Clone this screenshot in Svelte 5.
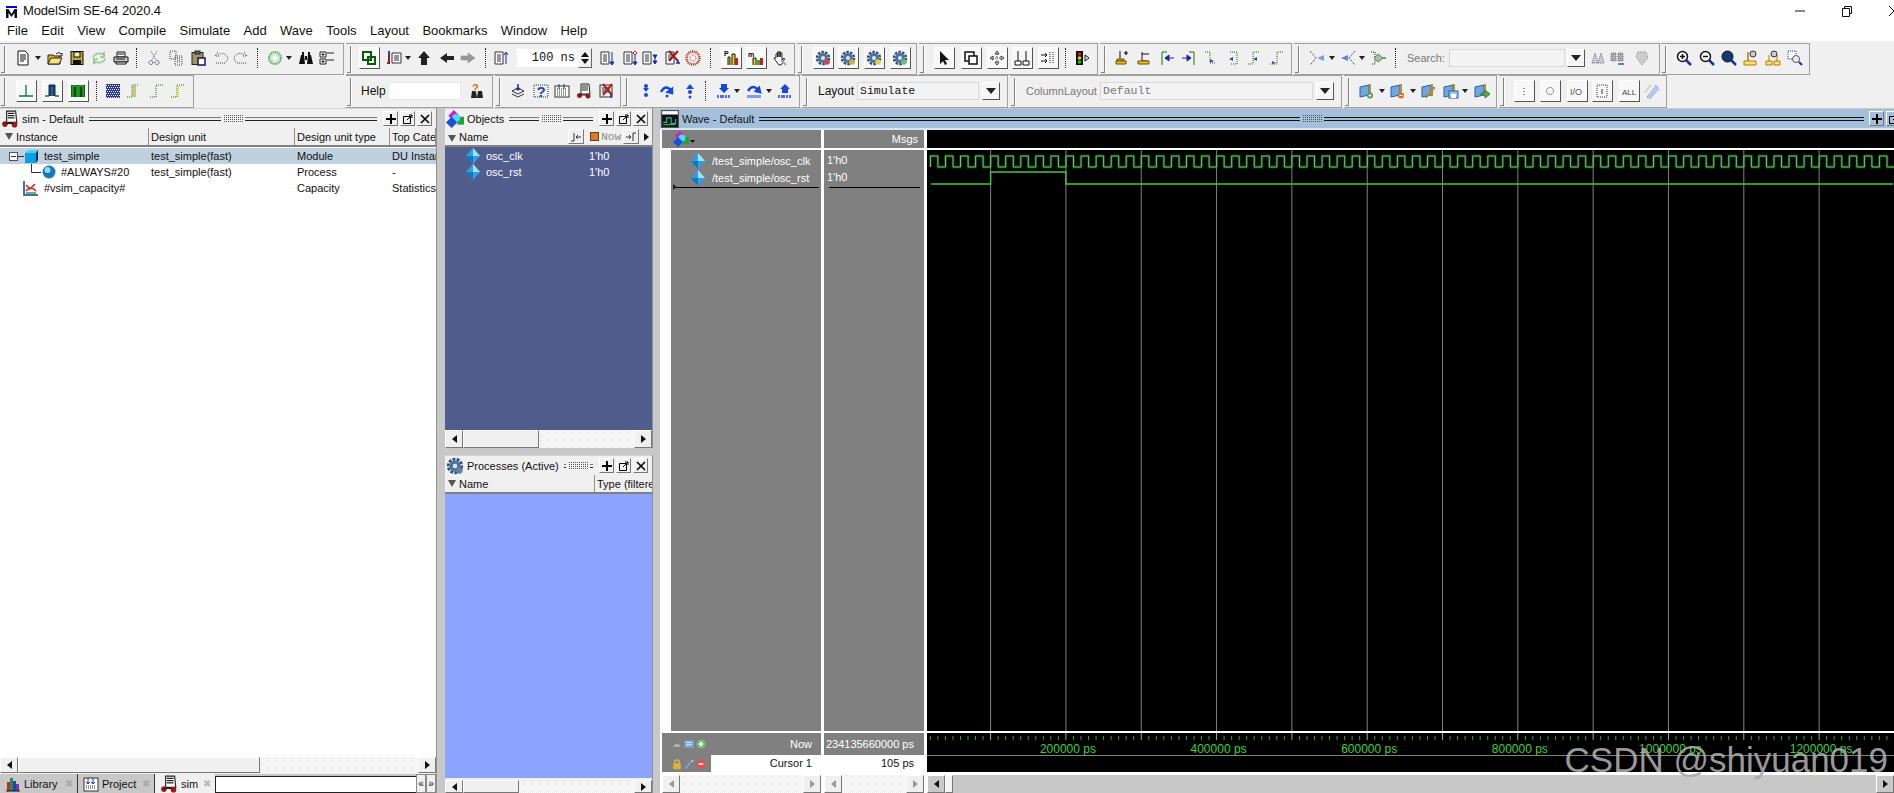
<script>
  const gear = (c) => `<circle cx="8" cy="8" r="6" fill="none" stroke="#2f5078" stroke-width="2.500" stroke-dasharray="2.500 1.200"/><circle cx="8" cy="8" r="5" fill="#4f729c"/><circle cx="8" cy="8" r="2" fill="#dfe6ee"/><circle cx="12" cy="12" r="2.800" fill="${c}"/>`;
  const dia = `<path d="M8 0l7 8-7 8-7-8z" fill="#2f9fe8"/><path d="M8 0l7 8H8z" fill="#9fe4ff"/><path d="M1 8l7 8V8z" fill="#1476c0"/>`;
  const wfold = (b) => `<path d="M1 4l9-2v10l-9 2z" fill="#6fa8e0" stroke="#2c5f94"/><path d="M11 1v12" stroke="#b89030" stroke-width="2"/>${b}`;
  const I = {
    doc: `<path d="M3 1h7l3 3v11H3z" fill="#fff" stroke="#111"/><path d="M5 5h6M5 7h6M5 9h6M5 11h4" stroke="#111"/>`,
    open: `<path d="M1 5h5l1 1h6v8H1z" fill="#d8b430" stroke="#222"/><path d="M1 14l3-6h11l-3 6z" fill="#f8e47a" stroke="#222"/><path d="M9 4q3-3 5 0l1-1v3h-3" fill="none" stroke="#222"/>`,
    save: `<rect x="2" y="1.500" width="12" height="13" fill="#c0a838" stroke="#111"/><rect x="5" y="2" width="6" height="5" fill="#ede6b8" stroke="#111"/><rect x="4" y="10" width="8" height="4.500" fill="#111"/>`,
    reload: `<path d="M2 7q3-5 9-3l2-1v4h-4M14 9q-3 5-9 3l-2 1V9h4" fill="none" stroke="#8cc48c" stroke-width="2" stroke-dasharray="1.500 .5"/>`,
    print: `<path d="M4 2h8v5H4z" fill="#fff" stroke="#111"/><path d="M1 7h14v5H1z" fill="#ccc" stroke="#111"/><path d="M3 12h10v2H3z" fill="#fff" stroke="#111"/><path d="M5 4h6M3 9h9" stroke="#111"/>`,
    cut: `<path d="M5 1l5 9M11 1L6 10" stroke="#666" stroke-dasharray="1 1"/><circle cx="5" cy="12.500" r="2" fill="none" stroke="#22228c" stroke-dasharray="1 .7"/><circle cx="11" cy="12.500" r="2" fill="none" stroke="#22228c" stroke-dasharray="1 .7"/>`,
    copy: `<path d="M2 1h6v8H2zM7 6h7v9H7z" fill="#eee" stroke="#444" stroke-dasharray="1 1"/><path d="M9 8h4M9 10h4M9 12h4" stroke="#446" stroke-dasharray="1 1"/>`,
    paste: `<rect x="2" y="2.500" width="11" height="12" fill="#a09860" stroke="#222"/><rect x="5" y="1" width="5" height="3" fill="#666" stroke="#222"/><rect x="8" y="8" width="7" height="7" fill="#fff" stroke="#12126a" stroke-width="1.500"/>`,
    undo: `<path d="M5 5q4-3 8 0t-1 8H2M5 2L2 6h5" fill="none" stroke="#444" stroke-dasharray="1 1"/>`,
    redo: `<path d="M11 5q-4-3-8 0t1 8h10M11 2l3 4H9" fill="none" stroke="#444" stroke-dasharray="1 1"/>`,
    disc: `<circle cx="8" cy="8" r="6" fill="#cfe8cf" stroke="#6db26d" stroke-width="2" stroke-dasharray="1.500 .6"/><path d="M8 5l3 3-3 3-3-3z" fill="#fff"/>`,
    binoc: `<path d="M1 14l2-9h3l1 9zM15 14l-2-9h-3l-1 9z" fill="#111"/><path d="M4 2h2v4H4zM10 2h2v4h-2zM7 6h2v4H7z" fill="#111"/>`,
    tree: `<path d="M1 2h6v5H1zM1 9h6v5H1z" fill="#fff" stroke="#222"/><path d="M2.500 4.500h3M4 3v3M2.500 11.500h3M4 10v3M8 3h7M8 10h7" stroke="#222"/>`,
    compare: `<rect x="2" y="2" width="8" height="8" fill="none" stroke="#0a5a0a" stroke-width="2"/><rect x="7" y="7" width="7" height="7" fill="none" stroke="#0a5a0a" stroke-width="2"/>`,
    sig: `<path d="M3 6v7H1" fill="none" stroke="#a01818" stroke-width="2"/><path d="M3 1v5" stroke="#2040d0" stroke-width="2"/><path d="M6 3h9v10H6z" fill="#fff" stroke="#333"/><path d="M8 6h5M8 8h5M8 10h5" stroke="#333"/>`,
    up: `<path d="M8 1l6 7h-3v7H5V8H2z" fill="#222"/>`,
    left: `<path d="M1 8l7-5v3h7v4H8v3z" fill="#222"/>`,
    right: `<path d="M15 8L8 3v3H1v4h7v3z" fill="#999" stroke="#888" stroke-dasharray="1 1"/>`,
    lup: `<path d="M2 2h8v12H2z" fill="#fff" stroke="#333"/><path d="M4 5h4M4 7h4M4 9h4M4 11h4" stroke="#333"/><path d="M13 14V3M11 5l2-3 2 3" stroke="#1830a0" fill="none"/>`,
    ldn: `<path d="M2 2h8v12H2z" fill="#fff" stroke="#333"/><path d="M4 5h4M4 7h4M4 9h4M4 11h4" stroke="#333"/><path d="M13 2v11M11 12h4l-2 3z" stroke="#1830a0" fill="#1830a0"/>`,
    ldr: `<path d="M2 2h8v12H2z" fill="#fff" stroke="#333"/><path d="M4 5h4M4 7h4M4 9h4M4 11h4" stroke="#333"/><path d="M13 5v8M11 12h4l-2 3z" stroke="#1830a0" fill="#1830a0"/><path d="M11 3l2-2 2 2-2 2z" fill="none" stroke="#c02020"/>`,
    lds: `<path d="M1 2h8v12H1z" fill="#fff" stroke="#333"/><path d="M3 5h4M3 7h4M3 9h4M3 11h4" stroke="#333"/><path d="M13 6v7M11 11h4l-2 3zM11 5h4l-2 3z" stroke="#1830a0" fill="#1830a0"/>`,
    ldx: `<path d="M1 2h8v12H1z" fill="#fff" stroke="#333"/><path d="M3 5h4M3 7h4M3 9h4" stroke="#333"/><path d="M4 1l9 10M13 1L4 11" stroke="#a01818" stroke-width="2"/><path d="M13 10v3M11 13h4" stroke="#1830a0" stroke-width="1.500"/>`,
    brk: `<circle cx="8" cy="8" r="6.500" fill="none" stroke="#b03020" stroke-width="2.500" stroke-dasharray="1 .8"/><circle cx="8" cy="8" r="3" fill="none" stroke="#c85040" stroke-dasharray="1 .8"/>`,
    perf: `<path d="M1 1h14v14H1z" fill="#fff"/><path d="M5 15V7h2v8M9 15V4h3v11" fill="#e8d820" stroke="#111"/><path d="M12 15V8h3v7" fill="#c82020"/><text x="1" y="6" font-size="7" font-weight="700" fill="#000" font-family="Liberation Sans">P</text>`,
    perm: `<path d="M1 1h14v14H1z" fill="#fff"/><path d="M5 15V8h3v7" fill="#e8d820" stroke="#111"/><path d="M9 15v-5h3v5" fill="#40a040"/><path d="M12 15V8h3v7" fill="#c82020"/><text x="0" y="7" font-size="7" font-weight="700" fill="#000" font-family="Liberation Sans">m</text>`,
    hand: `<path d="M4 8V4q1-1 1.500 0v3-5q1-1 1.500 0v5-5q1-1 1.500 0v5-4q1-1 1.500 0v7l2-2q1 .5 0 2l-3 5H7L4 11 2 8q1-1 2 0z" fill="#fff" stroke="#222"/><path d="M9 10l5 5" stroke="#9ab" stroke-width="2"/>`,
    g1: gear('#c84848'), g2: gear('#d0b040'), g3: gear('#e0d040'), g4: gear('#70c070'),
    arrow: `<path d="M4 1v13l3-3 2 4 2-1-2-4h4z" fill="#111"/>`,
    zoomr: `<path d="M2 2h9v9H2z" fill="none" stroke="#111" stroke-width="1.500"/><path d="M6 6h8v8H6z" fill="#fff" stroke="#111" stroke-width="1.500"/>`,
    move: `<path d="M8 1l2 3H6zM8 15l2-3H6zM1 8l3-2v4zM15 8l-3-2v4z" fill="#fff" stroke="#333"/><path d="M8 4v8M4 8h8" stroke="#444" stroke-dasharray="1 1"/>`,
    cur2: `<path d="M4 1v10M12 1v10M1 11h6v4H1zM9 11h6v4H9z" fill="#fff" stroke="#111"/>`,
    ports: `<path d="M3 3h10v10H3z" fill="#fff"/><path d="M1 5h6M1 11h6M5 3l2 2-2 2M5 9l2 2-2 2" fill="none" stroke="#111"/><path d="M10 2v12M13 2v12" stroke="#111" stroke-dasharray="1 1"/>`,
    light: `<rect x="2" y="1" width="7" height="14" fill="#111"/><circle cx="5.500" cy="4" r="1.800" fill="#e01010"/><circle cx="5.500" cy="8" r="1.800" fill="#e0d010"/><circle cx="5.500" cy="12" r="1.800" fill="#10d010"/><path d="M11 5l4 3-4 3z" fill="none" stroke="#111"/>`,
    addc: `<path d="M6 1v10" stroke="#111"/><path d="M3 9h7v2H3z" fill="#f0c020" stroke="#6a5000"/><path d="M2 11h10v3H2z" fill="#f0c020" stroke="#6a5000"/><path d="M10 3h4M12 1v4" stroke="#111" stroke-width="1.200"/>`,
    delc: `<path d="M6 2v9h6M6 4h7" stroke="#111" fill="none"/><path d="M2 11h11v3H2z" fill="#f0c020" stroke="#6a5000"/>`,
    prev: `<path d="M1 15V2h5" fill="none" stroke="#0a7a0a"/><path d="M4 8h9M4 8l4-3v6z" stroke="#2020c0" fill="#2020c0"/>`,
    nxt: `<path d="M15 2v13h-5" fill="none" stroke="#0a7a0a" transform="matrix(1 0 0 -1 0 17)"/><path d="M3 8h8M12 8L8 5v6z" stroke="#2020c0" fill="#2020c0"/>`,
    e1: `<path d="M2 2h5v11h6" fill="none" stroke="#0a7a0a" stroke-dasharray="1 1"/><path d="M7 9l4 2-4 2z" fill="#44a"/>`,
    e2: `<path d="M4 2h7v12H4" fill="none" stroke="#0a7a0a" stroke-dasharray="1 1"/><path d="M3 9l4-2v4z" fill="#44a"/>`,
    e3: `<path d="M2 14h5V2h6" fill="none" stroke="#0a7a0a" stroke-dasharray="1 1"/><path d="M7 9l4-2v4z" fill="#44a"/>`,
    e4: `<path d="M1 14h7V2h7" fill="none" stroke="#0a7a0a" stroke-dasharray="1 1"/><path d="M3 11l4 2-4 1z" fill="#44a"/>`,
    m1: `<path d="M1 1l6 7-6 7" fill="none" stroke="#222" stroke-dasharray="1 1"/><path d="M8 8l7-3v6z" fill="#7aa4d8"/>`,
    m2: `<path d="M15 1L9 8l6 7" fill="none" stroke="#222" stroke-dasharray="1 1"/><path d="M1 8l7-3v6z" fill="#5a88d0"/>`,
    m3: `<path d="M1 2h4v12H1" fill="none" stroke="#222" stroke-dasharray="1 1"/><path d="M8 4l5 4-5 4-4-4z" fill="#9cc89c" stroke="#5a8a5a"/><path d="M13 8h3" stroke="#222"/>`,
    f1: `<path d="M2 13l3-10 3 10zM8 13l3-10 3 10z" fill="#ccd" stroke="#667" stroke-dasharray="1 1"/>`,
    f2: `<path d="M2 11V3h5v8zM9 11V3h5v8z" fill="#aaa" stroke="#777" stroke-dasharray="1 1"/><path d="M9 14h6" stroke="#6a7ad8" stroke-width="2"/>`,
    f3: `<path d="M4 2h8l2 6-6 7-6-8z" fill="#ccc" stroke="#888" stroke-dasharray="1 1"/>`,
    zin: `<circle cx="6.500" cy="6.500" r="5" fill="#fff" stroke="#111" stroke-width="1.500"/><path d="M4 6.500h5M6.500 4v5" stroke="#111" stroke-width="1.500"/><path d="M10 10l5 5" stroke="#1830a0" stroke-width="2.500"/>`,
    zout: `<circle cx="6.500" cy="6.500" r="5" fill="#fff" stroke="#111" stroke-width="1.500"/><path d="M4 6.500h5" stroke="#111" stroke-width="1.500"/><path d="M10 10l5 5" stroke="#1830a0" stroke-width="2.500"/>`,
    zfull: `<circle cx="6.500" cy="6.500" r="5.500" fill="#0e3a78" stroke="#111"/><path d="M10 10l5 5" stroke="#1830a0" stroke-width="2.500"/>`,
    zc1: `<path d="M2 11h12v4H2z" fill="#ffe070" stroke="#b08000"/><path d="M6 11V2" stroke="#b08000" stroke-width="1.500"/><circle cx="11" cy="4" r="3" fill="#ccc" stroke="#333"/>`,
    zc2: `<path d="M1 11h6v4H1zM9 11h6v4H9z" fill="#ffe070" stroke="#b08000"/><path d="M4 11V5M12 11V5" stroke="#b08000"/><circle cx="9" cy="4" r="3" fill="#ccc" stroke="#333"/>`,
    zsel: `<path d="M1 1h8v8H1z" fill="#fff" stroke="#1830a0" stroke-dasharray="1 1"/><circle cx="9" cy="9" r="3.500" fill="#eee" stroke="#555"/><path d="M12 12l3 3" stroke="#1830a0" stroke-width="2"/>`,
    t1: `<path d="M8 2v11M1 13h14" stroke="#0a7a3a" stroke-width="1.300"/>`,
    t2: `<path d="M1 13h4M11 13h4" stroke="#0a7a3a" stroke-width="1.300"/><path d="M5 13V2h6v11" fill="#1a3a8c" stroke="#0a2a6a"/><path d="M7 13V4h2v9" fill="#3a6a4c"/>`,
    t3: `<path d="M1 14V2h14v12z" fill="#0a6a0a"/><path d="M3 14V3h4v11M9 14V3h4v11" fill="#0a4a0a" stroke="#3ac03a"/>`,
    dith: `<rect x="1" y="1" width="14" height="14" fill="#2a3a9a"/><path d="M1 2.500h14M2 4.500h13M1 6.500h14M2 8.500h13M1 10.500h14M2 12.500h13M1 14.500h14" stroke="#e8e8f8" stroke-dasharray="1 1"/>`,
    ed1: `<path d="M1 14h5V2h7" fill="none" stroke="#0a7a0a" stroke-dasharray="1 1"/><path d="M7 2v12M9 2v12" stroke="#b8b860" stroke-width="1.500"/>`,
    ed2: `<path d="M1 14h6V2h7" fill="none" stroke="#0a7a0a" stroke-dasharray="1 1"/>`,
    ed3: `<path d="M1 14h6V2h7" fill="none" stroke="#0a7a0a" stroke-dasharray="1 1"/><path d="M8 3v11" stroke="#d8e040" stroke-width="1.500"/>`,
    stack: `<path d="M2 8l6-3 6 3-6 3z" fill="#eee" stroke="#333"/><path d="M2 11l6 3 6-3" fill="none" stroke="#333"/><path d="M8 1v6M6 5l2 2 2-2" stroke="#1830a0" fill="none" stroke-width="1.500"/>`,
    qm: `<rect x="1" y="2" width="14" height="12" fill="#eee" stroke="#333" stroke-dasharray="1 1"/><text x="3.500" y="14" font-size="15" font-weight="700" fill="#1848b0" font-family="Liberation Sans">?</text>`,
    cal: `<rect x="1" y="3" width="14" height="11" fill="#fff" stroke="#333"/><path d="M3 6h10M3 8h10M3 10h10M3 12h10" stroke="#333" stroke-dasharray="1 1"/><path d="M5 1v5M10 1v5" stroke="#1830a0"/>`,
    sim: `<path d="M5 1h8l1 10H5z" fill="#fff" stroke="#222"/><path d="M6 3h6M6 5h6M6 7h6" stroke="#222"/><circle cx="3.500" cy="12.500" r="2.500" fill="#a01818"/><circle cx="12" cy="13" r="2.500" fill="#a01818"/><path d="M3 12h8" stroke="#222"/>`,
    xdoc: `<rect x="1" y="2" width="12" height="12" fill="#eee" stroke="#333"/><path d="M3 5h8M3 7h8M3 9h8" stroke="#333"/><path d="M4 1l9 11M13 1L4 12" stroke="#b02020" stroke-width="2"/><path d="M12 11v4" stroke="#1830a0" stroke-width="1.500"/>`,
    helpb: `<path d="M2 15l1-7h4l1 7zM8 15l1-7h4l1 7z" fill="#222"/><text x="3" y="9" font-size="11" font-weight="700" fill="#c87818" font-family="Liberation Sans">?</text>`,
    sd1: `<circle cx="8" cy="3" r="2" fill="#1848d8"/><path d="M5 5h6l-3 4z" fill="#1848d8"/><circle cx="8" cy="12" r="2" fill="#1848d8"/>`,
    so: `<path d="M2 9q5-9 11 0M13 10l-4-1 4-3z" fill="none" stroke="#1848d8" stroke-width="2.500"/><circle cx="8" cy="13" r="1.500" fill="#1848d8"/>`,
    su: `<path d="M8 1l4 5H4z" fill="#1848d8"/><circle cx="8" cy="9" r="2" fill="#1848d8"/><circle cx="8" cy="14" r="1.500" fill="#1848d8"/>`,
    sbd: `<path d="M5 1h6v4h2l-5 5-5-5h2z" fill="#1848d8"/><path d="M2 12v3M5 12v3M7 12v3M10 12v3M13 12v3" stroke="#1848d8" stroke-width="1.500"/>`,
    sbo: `<path d="M2 8q5-8 11 0M14 9l-4-1 3-3z" fill="none" stroke="#1848d8" stroke-width="2.500"/><path d="M2 12v3M4 12v3M6 12v3M8 12v3M10 12v3M12 12v3M14 12v3" stroke="#1848d8"/>`,
    sbu: `<path d="M8 1l5 5h-2v4H5V6H3z" fill="#1848d8"/><path d="M2 12v3M5 12v3M7 12v3M10 12v3M13 12v3" stroke="#1848d8" stroke-width="1.500"/>`,
    la: wfold(`<circle cx="11" cy="12.500" r="3" fill="#50a050"/><path d="M9.500 12.500h3M11 11v3" stroke="#fff"/>`),
    ld: wfold(`<circle cx="11" cy="12.500" r="3" fill="#e07020"/><path d="M9.500 12.500h3" stroke="#fff"/>`),
    le: wfold(`<path d="M14 5L7 13l-2 2 1-3 7-8z" fill="#f0c060" stroke="#a07020"/>`),
    ls: wfold(`<rect x="6" y="8" width="9" height="7" fill="#9cc8e8" stroke="#2c5f94"/><rect x="8" y="11" width="5" height="4" fill="#fff"/>`),
    lg: wfold(`<path d="M7 10h4V7l5 4-5 4v-3H7z" fill="#60a860" stroke="#3a7a3a"/>`),
    b1: `<path d="M8 5v1M8 8v1M8 11v1" stroke="#333"/>`,
    b2: `<circle cx="8" cy="8" r="3.500" fill="none" stroke="#555" stroke-dasharray="1 .6"/>`,
    b3: `<text x="1" y="12" font-size="9" fill="#555" font-family="Liberation Sans">I/O</text>`,
    b4: `<path d="M3 2h10v12H3z" fill="none" stroke="#333" stroke-dasharray="1 1"/><path d="M8 6v5" stroke="#333"/>`,
    b5: `<text x="1" y="12" font-size="8" fill="#444" font-family="Liberation Sans">ALL</text>`,
    b6: `<path d="M3 14L12 2l3 4-9 10z" fill="#b8c8e8" stroke="#8898c8" stroke-dasharray="1 1"/><path d="M1 9l6-7" stroke="#9cc89c" stroke-width="2" stroke-dasharray="1 1"/>`,
    obj: `<path d="M7 0l5 5-5 5-5-5z" fill="#d020c0"/><path d="M10 6h6v7h-6z" fill="#20a040"/><circle cx="9" cy="7" r="3.500" fill="#50d8f0"/><path d="M5 6l5 5-5 5-5-5z" fill="#1850e0"/>`,
    wavew: `<rect x=".5" y=".5" width="15" height="15" fill="#111" stroke="#555"/><rect x="1" y="1" width="14" height="3" fill="#fff"/><path d="M2 11h3V7h4v5h4V8" fill="none" stroke="#20c0a0"/><path d="M2 13h11" stroke="#20c060"/>`,
    diamond: dia,
    ball: `<circle cx="8" cy="8" r="6.500" fill="#1878b8"/><circle cx="6.500" cy="6" r="3" fill="#90d8f0"/>`,
    cube: `<path d="M2 5h11v10H2z" fill="#0aa0e8"/><path d="M2 5l4-3h9l-2 3z" fill="#48d0f8"/><path d="M13 5l2-3v10l-2 3z" fill="#0a2848"/>`,
    cap: `<path d="M1 1v14h14" fill="none" stroke="#1a3a8c" stroke-width="1.500"/><path d="M3 5l4 4 5-5M3 11q5-6 10 0" fill="none" stroke="#d02020" stroke-width="1.500"/><path d="M3 13h10" stroke="#20a060" stroke-width="1.500"/>`,
    lib: `<path d="M2 15V6h3v9z" fill="#c03020"/><path d="M5 15V2h3v13z" fill="#209050"/><path d="M8 15V5h3v10z" fill="#2040c0"/><path d="M11 15V8h3v7z" fill="#8030a0"/><path d="M1 15h14" stroke="#111"/>`,
    proj: `<rect x="1" y="2" width="14" height="13" fill="#fff" stroke="#333"/><path d="M3 10h10M3 12h10" stroke="#333" stroke-dasharray="1 1"/><path d="M5 2v6M3 6l2 2 2-2M10 2v6M8 6l2 2 2-2" stroke="#1830a0" fill="none"/>`,
    gear0: gear('#5f82ac'),
    lock: `<path d="M5 7V4q3-3 6 0v3" fill="none" stroke="#e0c060" stroke-width="1.500"/><rect x="3" y="7" width="10" height="8" fill="#e8b030"/>`,
    wrench: `<path d="M3 14l7-8" stroke="#7aa4e0" stroke-width="2.500"/><path d="M10 5l3-3 1 3z" fill="#ddd"/>`,
    minus: `<circle cx="8" cy="8" r="6" fill="#e05050"/><path d="M5 8h6" stroke="#fff" stroke-width="2"/>`,
    plusg: `<circle cx="8" cy="8" r="6" fill="#70c070"/><path d="M5 8h6M8 5v6" stroke="#fff" stroke-width="2"/>`,
    note: `<rect x="2" y="3" width="12" height="10" fill="#7aa8e0"/><path d="M4 6h8M4 9h8" stroke="#fff"/>`,
    plugs: `<path d="M3 12h10l-2-4H5zM6 4v4M10 4v4" fill="#bbb" stroke="#888"/>`
  };

  const BORDER = new Set(['compare','perf','perm','g1','g2','g3','g4','arrow','zoomr','move','cur2','ports','t1','t2','t3','b1','b2','b3','b4','b5']);
  const W = (id) => id === 'c' ? 7 : id === 's' ? 2 : BORDER.has(id) ? 21 : 18;

  function build(x0, w, list) {
    let end = x0 + 7;
    const items = list.map((e) => {
      const kind = e.k || (e[0] === 'c' ? 'caret' : e[0] === 's' ? 'sep' : 'icon');
      const id = e[0];
      const width = e.k ? e.w : W(id);
      const left = e.k ? e.x : e[1] - width / 2;
      const m = left - end;
      end = left + width;
      return { kind, id, width, m, text: e.t, b: BORDER.has(id) };
    });
    return { x0, w, items };
  }
  const row = (groups) => {
    let end = 0;
    return groups.map((g) => {
      const b = build(g[0], g[1] - g[0], g[2]);
      b.m = g[0] - end;
      end = g[1];
      return b;
    });
  };

  const row1 = row([
    [0, 344, [['doc',23],['c',38],['open',55],['save',77],['reload',99],['print',121],['s',137],['cut',154],['copy',176],['paste',198],['undo',221],['redo',241],['s',258],['disc',275],['c',289],['binoc',306],['tree',327]]],
    [346, 795, [['compare',369],['sig',394],['c',408],['up',424],['left',447],['right',468],['s',486],['lup',501],{k:'spin',x:517,w:60,t:'100 ns'},{k:'spinb',x:578,w:14},['ldn',607],['ldr',630],['lds',650],['ldx',673],['brk',693],['s',711],['perf',731],['perm',756],['hand',780]]],
    [797, 917, [['g1',823],['g2',848],['g3',874],['g4',900]]],
    [919, 1098, [['arrow',944],['zoomr',971],['move',997],['cur2',1022],['ports',1048],['s',1066],['light',1082]]],
    [1100, 1292, [['addc',1122],['delc',1144],['prev',1169],['nxt',1187],['e1',1211],['e2',1234],['e3',1254],['e4',1277]]],
    [1294, 1660, [['m1',1317],['c',1332],['m2',1348],['c',1362],['m3',1378],['s',1396],{k:'label dim',x:1407,w:38,t:'Search:'},{k:'combo',x:1449,w:116,t:''},{k:'dd',x:1567,w:18},['f1',1598],['f2',1617],['f3',1642]]],
    [1661, 1810, [['zin',1684],['zout',1707],['zfull',1729],['zc1',1750],['zc2',1773],['zsel',1795]]]
  ]);
  const row2 = row([
    [0, 194, [['t1',26],['t2',52],['t3',78],['s',97],['dith',113],['ed1',134],['ed2',157],['ed3',178]]],
    [346, 493, [{k:'label',x:361,w:22,t:'Help'},{k:'input',x:388,w:73},['helpb',477]]],
    [495, 621, [['stack',518],['qm',541],['cal',562],['sim',584],['xdoc',607]]],
    [622, 800, [['sd1',646],['so',667],['su',690],['s',706],['sbd',724],['c',737],['sbo',754],['c',769],['sbu',785]]],
    [802, 1008, [{k:'label',x:818,w:36,t:'Layout'},{k:'combo',x:857,w:122,t:'Simulate'},{k:'dd',x:982,w:18}]],
    [1010, 1342, [{k:'label dim',x:1026,w:72,t:'ColumnLayout'},{k:'combo off',x:1100,w:213,t:'Default'},{k:'dd',x:1316,w:18}]],
    [1344, 1497, [['la',1367],['c',1382],['ld',1398],['c',1413],['le',1429],['ls',1451],['c',1465],['lg',1482]]],
    [1499, 1667, [['b1',1524],['b2',1550],['b3',1577],['b4',1602],['b5',1629],['b6',1652]]]
  ]);

  const menu = ['File','Edit','View','Compile','Simulate','Add','Wave','Tools','Layout','Bookmarks','Window','Help'];

  // Wave canvas geometry: origin at (927,150)
  const OX = 927, OY = 150, WW = 967, WH = 581;
  const gridStep = 75.32;
  const grid0 = 990.6;
  const gridX = Array.from({ length: 12 }, (_, i) => grid0 + i * gridStep - OX);
  let clk = `M${930.4 - OX} ${167 - OY}`;
  for (let x = 930.4; x < 1894; x += 15.064) {
    clk += `V${156 - OY}H${(x + 7.532 - OX).toFixed(1)}V${167 - OY}H${(x + 15.064 - OX).toFixed(1)}`;
  }
  const g = (x) => (x - OX).toFixed(1);
  const rst = `M${g(931)} ${184 - OY}H${g(990.6)}V${172 - OY}H${g(1065.9)}V${184 - OY}H${g(1893)}`;
  const ticks = Array.from({ length: 130 }, (_, i) => grid0 + (i - 8) * 7.532 - OX).filter((x) => x >= 0 && x < WW);
  const isMajor = (x) => Math.abs(((x - (grid0 - OX)) / gridStep) - Math.round((x - (grid0 - OX)) / gridStep)) < 0.01;
  const labels = [['200000 ps',1],['400000 ps',3],['600000 ps',5],['800000 ps',7],['1000000 ps',9],['1200000 ps',11]];
</script>

{#snippet ic(id, size = 16)}
  <svg class="ic" width={size} height={size} viewBox="0 0 16 16">{@html I[id]}</svg>
{/snippet}

{#snippet grip()}
  <div class="grip">
    <span class="gl"></span><span class="dots"></span><span class="gl"></span>
  </div>
{/snippet}

{#snippet btns()}
  <span class="pb"><svg width="12" height="12" viewBox="0 0 12 12"><path d="M6 1v10M1 6h10" stroke="#000" stroke-width="2"/></svg></span>
  <span class="pb"><svg width="12" height="12" viewBox="0 0 12 12"><path d="M1.500 3.500h7v7h-7z" fill="none" stroke="#000"/><path d="M5 7l5-5M7 2h3v3" fill="none" stroke="#000"/></svg></span>
  <span class="pb"><svg width="12" height="12" viewBox="0 0 12 12"><path d="M2 2l8 8M10 2l-8 8" stroke="#000" stroke-width="1.600"/></svg></span>
{/snippet}

{#snippet arrow(dir, off)}
  <span class="sa" class:off><span class={dir}></span></span>
{/snippet}

{#snippet sb(cls, thumb, off)}
  <div class="sb {cls}">
    {@render arrow('al', off)}
    <span class="thumb" class:hide={thumb === 0} style:width="{thumb}px"></span>
    <span class="track"></span>
    {@render arrow('ar', off)}
  </div>
{/snippet}

{#snippet tbrow(groups, cls)}
  <div class="tbrow {cls}">
    {#each groups as gr}
      <div class="tb" style:margin-left="{gr.m}px" style:width="{gr.w}px">
        <span class="tgrip"></span>
        {#each gr.items as it}
          <span class="item {it.kind}" class:bd={it.b} style:margin-left="{it.m}px" style:width="{it.width}px">
            {#if it.kind === 'icon'}
              {@render ic(it.id)}
            {:else if it.kind === 'spinb'}
              <span class="up"></span><span class="dn"></span>
            {:else if it.kind === 'dd'}
              <span class="ddt"></span>
            {:else if it.text}
              {it.text}
            {/if}
          </span>
        {/each}
      </div>
    {/each}
  </div>
{/snippet}

<div class="app">
  <header class="titlebar">
    <svg class="logo" width="16" height="16" viewBox="0 0 16 16"><rect x="3" y="3" width="11" height="2" fill="#0000d0"/><path d="M3 15V6h2.500L8.500 11 11.500 6H14v9h-2.500V10L8.500 14 5.500 10v5z" fill="#111"/></svg>
    <span class="apptitle">ModelSim SE-64 2020.4</span>
    <div class="winctl">
      <svg width="12" height="12" viewBox="0 0 12 12"><path d="M1 6h10" stroke="#111"/></svg>
      <svg width="12" height="12" viewBox="0 0 12 12"><path d="M1.500 3.500h7v8h-7zM3.500 3V1.500h7v7H9" fill="none" stroke="#111"/></svg>
      <svg width="12" height="12" viewBox="0 0 12 12"><path d="M1 1l10 10M11 1L1 11" stroke="#111"/></svg>
    </div>
  </header>
  <nav class="menubar">
    {#each menu as m}<span>{m}</span>{/each}
  </nav>

  <section class="toolbars">
    {@render tbrow(row1, 'r1')}
    {@render tbrow(row2, 'r2')}
  </section>

  <main class="work">
    <div class="col left">
      <div class="panel sim">
        <div class="ptitle">
          {@render ic('sim', 18)}<span class="ptext">sim - Default</span>{@render grip()}{@render btns()}
        </div>
        <div class="thead simgrid">
          <span><i class="sort"></i>Instance</span><span>Design unit</span><span>Design unit type</span><span>Top Category</span>
        </div>
        <div class="tbody white">
          <div class="trow simgrid sel">
            <span class="tree">
              <svg class="gut" width="40" height="16" viewBox="0 0 40 16">
                <rect x="9.500" y="4.500" width="8" height="8" fill="#fff" stroke="#555"/><path d="M11 8.500h5M18 8.500h6" stroke="#333"/>
                <g transform="translate(23 0)">{@html I.cube}</g>
              </svg>test_simple
            </span><span>test_simple(fast)</span><span>Module</span><span>DU Instance</span>
          </div>
          <div class="trow simgrid">
            <span class="tree">
              <svg class="gut" width="57" height="16" viewBox="0 0 57 16">
                <path d="M31.500 0v8.500H41" fill="none" stroke="#333"/>
                <g transform="translate(41 0)">{@html I.ball}</g>
              </svg>#ALWAYS#20
            </span><span>test_simple(fast)</span><span>Process</span><span>-</span>
          </div>
          <div class="trow simgrid">
            <span class="tree">
              <svg class="gut" width="40" height="16" viewBox="0 0 40 16">
                <g transform="translate(23 0)">{@html I.cap}</g>
              </svg>#vsim_capacity#
            </span><span></span><span>Capacity</span><span>Statistics</span>
          </div>
        </div>
        {@render sb('simsb', 242, false)}
        <div class="tabs">
          <span class="tab t1">{@render ic('lib',16)}<b>Library</b><em>✖</em></span>
          <span class="tab t2">{@render ic('proj',16)}<b>Project</b><em>✖</em></span>
          <span class="tab t3">{@render ic('sim',18)}<b>sim</b><em>✖</em></span>
          <span class="tabfill"></span>
          <span class="tabnav">«</span><span class="tabnav">»</span>
        </div>
      </div>
    </div>

    <div class="col mid">
      <div class="panel obj">
        <div class="ptitle">
          {@render ic('obj', 18)}<span class="ptext">Objects</span>{@render grip()}{@render btns()}
        </div>
        <div class="thead objhead">
          <span class="oname"><i class="sort"></i>Name</span>
          <span class="now">
            <span class="nb"><svg width="12" height="12" viewBox="0 0 12 12"><path d="M1 10h3V2M6 6h5M6 6l2-2M6 6l2 2" fill="none" stroke="#333"/></svg></span>
            <i class="osq"></i><span class="nowt">Now</span>
            <span class="nb"><svg width="12" height="12" viewBox="0 0 12 12"><path d="M11 2H8v8M1 6h5M6 6L4 4M6 6L4 8" fill="none" stroke="#333"/></svg></span>
            <i class="nar"></i>
          </span>
        </div>
        <div class="tbody navy">
          {#each ['osc_clk','osc_rst'] as s}
            <div class="orow">{@render ic('diamond', 16)}<span class="on">{s}</span><span class="ov">1'h0</span></div>
          {/each}
        </div>
        {@render sb('objsb', 76, false)}
      </div>
      <div class="panel proc">
        <div class="ptitle">
          {@render ic('gear0', 18)}<span class="ptext">Processes (Active)</span>{@render grip()}{@render btns()}
        </div>
        <div class="thead prochead"><span class="pn"><i class="sort"></i>Name</span><span>Type (filtered)</span></div>
        <div class="tbody peri"></div>
        {@render sb('procsb', 56, false)}
      </div>
    </div>

    <div class="col wave">
      <div class="ptitle wt">
        {@render ic('wavew', 18)}<span class="ptext">Wave - Default</span>{@render grip()}{@render btns()}
      </div>
      <div class="wgrid">
        <div class="wh hn">
          <svg class="ic" width="26" height="18" viewBox="0 0 26 18"><g transform="translate(3 1)">{@html I.obj}</g><path d="M20 10h5l-2.500 3z" fill="#111"/></svg>
        </div>
        <div class="wh hv">Msgs</div>
        <div class="wh hw"></div>

        <div class="wnames">
          <div class="strip"></div>
          <div class="nlist">
            {#each ['/test_simple/osc_clk','/test_simple/osc_rst'] as s}
              <div class="nrow">{@render ic('diamond', 16)}<span>{s}</span></div>
            {/each}
            <div class="nline"><i></i></div>
          </div>
        </div>
        <div class="wvals">
          <div class="vrow">1'h0</div><div class="vrow">1'h0</div>
          <div class="vline"></div>
        </div>
        <div class="wcanvas">
          <svg width={WW} height={WH} viewBox="0 0 {WW} {WH}">
            {#each gridX as x}<line x1={x} x2={x} y1="0" y2={WH} stroke="#808080"/>{/each}
            <path d={clk} fill="none" stroke="#1e6e1e" stroke-width="3" opacity=".5"/>
            <path d={clk} fill="none" stroke="#62d262"/>
            <path d={rst} fill="none" stroke="#3ccc3c" stroke-width="1.400"/>
          </svg>
        </div>

        <div class="wb bn">
          <div class="now1">
            <span class="mini">{@render ic('plugs',12)}{@render ic('note',12)}{@render ic('plusg',12)}</span><span>Now</span>
          </div>
          <div class="cur1">
            <span class="mini">{@render ic('lock',12)}{@render ic('wrench',12)}{@render ic('minus',12)}</span><span class="curw">Cursor 1</span>
          </div>
        </div>
        <div class="wb bv">
          <div class="nowv">234135660000 ps</div>
          <div class="curv">105 ps</div>
        </div>
        <div class="wb ba">
          <svg width={WW} height="39" viewBox="0 0 {WW} 39">
            {#each ticks as x}
              <line x1={x} x2={x} y1={isMajor(x) ? 0 : 3} y2="7" stroke={isMajor(x) ? '#7fbf7f' : '#35a035'}/>
            {/each}
            {#each labels as [t, i]}
              <text x={gridX[i] + 2} y="20" text-anchor="middle" class="axis">{t}</text>
            {/each}
            <line x1="0" x2={WW} y1="22.500" y2="22.500" stroke="#808080"/>
          </svg>
        </div>

        {@render sb('wsn', 0, true)}
        {@render sb('wsv', 0, true)}
        <div class="sb wsw">
          {@render arrow('al', false)}
          <span class="thumb wt2"></span>
          <span class="track grey"></span>
          {@render arrow('ar', false)}
        </div>
      </div>
      <div class="mark">CSDN @shiyuan019</div>
    </div>
  </main>
</div>

<style>
  :global(body) { margin: 0; background: #f0f0f0; }
  .app { width: 1894px; height: 793px; overflow: hidden; display: flex; flex-direction: column; position: relative; font: 11px "Liberation Sans", Arial, sans-serif; color: #111; background: #f0f0f0; }
  .ic { display: block; flex: none; }
  .titlebar { height: 21px; background: #fff; display: flex; align-items: center; font-size: 13px; }
  .logo { margin-left: 3px; }
  .apptitle { margin-left: 4px; letter-spacing: -.15px; }
  .winctl { margin-left: auto; display: flex; gap: 35px; margin-right: -6px; }
  .menubar { height: 20px; background: #fff; display: flex; align-items: center; gap: 13.4px; padding-left: 7px; font-size: 13px; box-sizing: border-box; padding-bottom: 2px; }
  .toolbars { height: 67px; background: #f0f0f0; padding-top: 2px; box-sizing: border-box; }
  .tbrow { display: flex; height: 32px; }
  .tbrow.r2 { height: 33px; }
  .tb { box-sizing: border-box; flex: none; height: 100%; display: flex; align-items: center; border-top: 1px solid #a0a0a0; border-right: 1px solid #a0a0a0; border-bottom: 1px solid #a0a0a0; position: relative; padding-bottom: 2px; }
  .tgrip { flex: none; width: 7px; align-self: stretch; position: relative; margin-bottom: -2px; }
  .tgrip::before { content: ""; position: absolute; left: 4px; top: 2px; bottom: 1px; width: 1px; background: #808080; box-shadow: 1px 0 0 #fff; }
  .tgrip::after { content: ""; position: absolute; left: 1px; bottom: 1px; width: 3px; height: 1px; background: #808080; }
  .item { flex: none; display: flex; align-items: center; justify-content: center; height: 20px; box-sizing: border-box; }
  .item.bd { height: 22px; border: 1px solid; border-color: #fff #555 #555 #fff; background: #f8f8f8; }
  .item.sep { height: 20px; width: 2px; border-left: 1px dotted #222; box-sizing: border-box; }
  .item.caret::after { content: ""; border: 3px solid transparent; border-top: 4px solid #222; border-bottom: 0; }
  .item.label { font-size: 12px; justify-content: flex-start; white-space: nowrap; }
  .item.dim { color: #777; font-size: 11px; }
  .item.input { background: #fff; border: 1px solid #e8e8e8; height: 18px; }
  .item.combo { height: 18px; background: #f4f4f4; border: 1px solid #d8d8d8; font: 11.500px "Liberation Mono", monospace; justify-content: flex-start; padding-left: 2px; white-space: pre; }
  .item.off { color: #777; }
  .item.spin { background: #fff; height: 18px; font: 12px "Liberation Mono", monospace; justify-content: flex-end; padding-right: 2px; white-space: pre; }
  .item.spinb { flex-direction: column; gap: 1px; height: 20px; border: 1px solid; border-color: #fff #666 #666 #fff; }
  .up { border: 4px solid transparent; border-bottom: 5px solid #111; border-top: 0; }
  .dn { border: 4px solid transparent; border-top: 5px solid #111; border-bottom: 0; margin-top: 1px; }
  .item.dd { height: 18px; border: 1px solid; border-color: #fff #555 #555 #fff; background: #f6f6f6; }
  .ddt { border: 5px solid transparent; border-top: 6px solid #222; border-bottom: 0; }

  .work { flex: 1; display: flex; background: #c8c8c8; min-height: 0; position: relative; }
  .col { display: flex; flex-direction: column; min-width: 0; }
  .left { width: 437px; flex: none; }
  .mid { width: 208px; flex: none; margin-left: 8px; gap: 7px; }
  .wave { flex: none; width: 1234px; margin-left: 7px; position: relative; background: #fff; }

  .panel { display: flex; flex-direction: column; background: #f0f0f0; border-right: 1px solid #909090; min-height: 0; overflow: hidden; }
  .sim { height: 685px; }
  .obj { height: 340px; flex: none; }
  .proc { flex: 1; }
  .ptitle { height: 20px; flex: none; display: flex; align-items: center; padding: 0 4px 0 1px; box-sizing: border-box; background: #f0f0f0; border-top: 1px solid #d4d4d4; font-size: 11px; overflow: hidden; }
  .ptext { margin-left: 3px; white-space: nowrap; }
  .grip { flex: 1; display: flex; align-items: center; margin: 0 4px 0 5px; height: 7px; min-width: 0; }
  .gl { flex: 1; height: 2px; border-top: 1px solid #777; border-bottom: 1px solid #222; min-width: 0; }
  .dots { width: 20px; height: 7px; background: repeating-conic-gradient(#555 0 25%, transparent 0 100%) 0 0 / 2px 2px; flex: none; margin: 0 2px; }
  .pb { width: 15px; height: 15px; flex: none; margin-left: 2px; display: flex; align-items: center; justify-content: center; border: 1px solid; border-color: #fff #777 #777 #fff; box-sizing: border-box; }
  .thead { height: 17px; flex: none; background: #f0f0f0; border-bottom: 2px solid #808080; box-sizing: content-box; font-size: 11px; display: flex; align-items: center; }
  .sort { display: inline-block; border: 4px solid transparent; border-top: 7px solid #555; border-bottom: 0; margin: 0 3px 0 3px; vertical-align: -1px; }
  .simgrid { display: grid; grid-template-columns: 149px 146px 95px 46px; }
  .simgrid > span { overflow: hidden; white-space: nowrap; padding-left: 2px; box-sizing: border-box; }
  .thead.simgrid > span { border-right: 1px solid #909090; height: 100%; display: flex; align-items: center; }
  .tbody { flex: 1; min-height: 0; overflow: hidden; }
  .white { background: #fff; padding-top: 1px; }
  .navy { background: #505c8c; padding-top: 1px; color: #fff; }
  .peri { background: #8ca4ff; }
  .trow { height: 16px; line-height: 16px; font-size: 11px; }
  .tree { display: flex; align-items: center; padding-left: 0 !important; }
  .gut { flex: none; margin-right: 4px; }
  .sel { background: #bfd0df; }
  .sb { height: 16px; flex: none; display: flex; background: #f0f0f0; }
  .sa { width: 18px; flex: none; display: flex; align-items: center; justify-content: center; box-sizing: border-box; border: 1px solid; border-color: #fff #777 #777 #fff; }
  .al { border: 4px solid transparent; border-right: 5px solid #111; border-left: 0; }
  .ar { border: 4px solid transparent; border-left: 5px solid #111; border-right: 0; }
  .sa.off .al { border-right-color: #999; }
  .sa.off .ar { border-left-color: #999; }
  .thumb { flex: none; box-sizing: border-box; border: 1px solid; border-color: #fff #777 #777 #fff; background: #f0f0f0; }
  .thumb.hide { display: none; }
  .track { flex: 1; background: repeating-conic-gradient(#ececec 0 25%, #fff 0 50%) 0 0 / 2px 2px; }
  .track.grey { background: #c8c8c8; }
  .tabs { height: 19px; flex: none; display: flex; align-items: center; background: #c8c8c8; font-size: 11px; margin-top: 1px; }
  .tab { display: flex; align-items: center; height: 100%; box-sizing: border-box; padding-left: 5px; border-right: 1px solid #333; }
  .tab b { font-weight: 400; margin-left: 3px; }
  .tab em { font-style: normal; font-size: 10px; color: #aaa; margin-left: auto; margin-right: 4px; }
  .t1 { width: 78px; }
  .t2 { width: 77px; }
  .t3 { width: 60px; background: #f0f0f0; border: 0; }
  .t3 em { color: #bbb; }
  .tabfill { flex: 1; height: 17px; background: #fff; border: 1px solid #222; border-right-width: 0; box-sizing: border-box; align-self: flex-end; }
  .tabnav { width: 10px; height: 100%; flex: none; text-align: center; line-height: 18px; background: #f0f0f0; border: 1px solid #888; box-sizing: border-box; font-size: 10px; }
  .objhead { position: relative; justify-content: space-between; }
  .now { display: flex; align-items: center; margin-right: 2px; }
  .nb { width: 16px; height: 15px; display: flex; align-items: center; justify-content: center; border: 1px solid; border-color: #fff #777 #777 #fff; box-sizing: border-box; }
  .osq { width: 7px; height: 7px; background: #e87818; border: 1px solid #444; margin-left: 6px; }
  .nowt { font: 11px "Liberation Mono", monospace; color: #888; margin: 0 2px 0 2px; }
  .nar { border: 4px solid transparent; border-left: 5px solid #111; border-right: 0; margin-left: 5px; margin-right: 1px; }
  .orow { height: 16px; display: flex; align-items: center; padding-left: 20px; position: relative; }
  .on { margin-left: 5px; width: 103px; }
  .prochead { justify-content: flex-start; }
  .pn { width: 149px; border-right: 1px solid #909090; height: 100%; display: flex; align-items: center; flex: none; }
  .prochead > span:last-child { padding-left: 2px; white-space: nowrap; overflow: hidden; }
  .objsb { height: 18px; }
  .procsb { height: 13px; margin-top: 2px; }

  .ptitle.wt { background: #a4bfdc; height: 22px; border-top-color: #c8c8c8; border-bottom: 2px solid #dbe5ef; }
  .wt .gl { border-color: #111; }
  .wt .grip { flex: none; width: 1105px; margin: 0 3px 0 5px; }
  .wgrid { flex: 1; min-height: 0; display: grid; grid-template-columns: 162px 103px 967px; grid-template-rows: 20px 581px 43px 1fr; background: #fff; padding-left: 2px; }
  .wh { background: #808080; border-bottom: 2px solid #fff; box-sizing: border-box; height: 20px; font-size: 11px; color: #fff; }
  .hn { margin-right: 3px; display: flex; align-items: center; padding-left: 8px; }
  .hv { margin-right: 3px; text-align: right; padding: 3px 6px 0 0; }
  .hw { background: #000; }
  .wnames { display: flex; margin-right: 3px; min-height: 0; }
  .strip { width: 9px; background: #fff; flex: none; }
  .nlist { flex: 1; background: #808080; color: #fff; padding-top: 2px; font-size: 11px; position: relative; }
  .nrow { height: 17px; display: flex; align-items: center; padding-left: 19px; gap: 6px; white-space: nowrap; }
  .nline { margin: 0 2px 0 2px; height: 0; border-top: 1px solid #000; position: relative; top: 1px; }
  .nline i { position: absolute; left: 0; top: -4px; border: 3px solid transparent; border-left: 4px solid #222; border-right: 0; }
  .wvals { background: #808080; margin-right: 3px; color: #fff; padding: 2px 0 0 3px; font-size: 11px; }
  .vrow { height: 17px; line-height: 17px; }
  .vline { border-top: 1px solid #000; margin: 1px 4px 0 2px; }
  .wcanvas { background: #000; overflow: hidden; }
  .wcanvas svg, .ba svg { display: block; }
  .wb { border-top: 2px solid #fff; border-bottom: 2px solid #fff; box-sizing: border-box; height: 43px; background: #808080; font-size: 11px; color: #111; }
  .bn, .bv { margin-right: 3px; }
  .now1, .nowv { height: 22px; color: #fff; display: flex; align-items: center; }
  .now1 { justify-content: space-between; padding: 0 9px 0 9px; }
  .mini { display: flex; align-items: center; }
  .cur1 { display: flex; height: 17px; align-items: center; padding-left: 9px; }
  .curw { background: #fff; flex: 1; height: 100%; text-align: right; padding-right: 9px; line-height: 17px; margin-left: 4px; }
  .nowv { justify-content: flex-end; padding-right: 10px; white-space: nowrap; }
  .curv { height: 17px; background: #fff; text-align: right; padding-right: 10px; line-height: 17px; }
  .ba { background: #000; }
  .axis { fill: #3fd03f; font: 12px "Liberation Sans", sans-serif; }
  .wsn, .wsv { height: 18px; margin-right: 3px; margin-top: 1px; }
  .wsw { height: 18px; margin-top: 1px; background: #c8c8c8; }
  .wt2 { width: 8px; background: #f4f4f4; }
  .mark { position: absolute; right: 6px; bottom: 13px; font: 35px "Liberation Sans", sans-serif; color: rgba(168,168,168,.92); white-space: nowrap; line-height: 40px; }
</style>
